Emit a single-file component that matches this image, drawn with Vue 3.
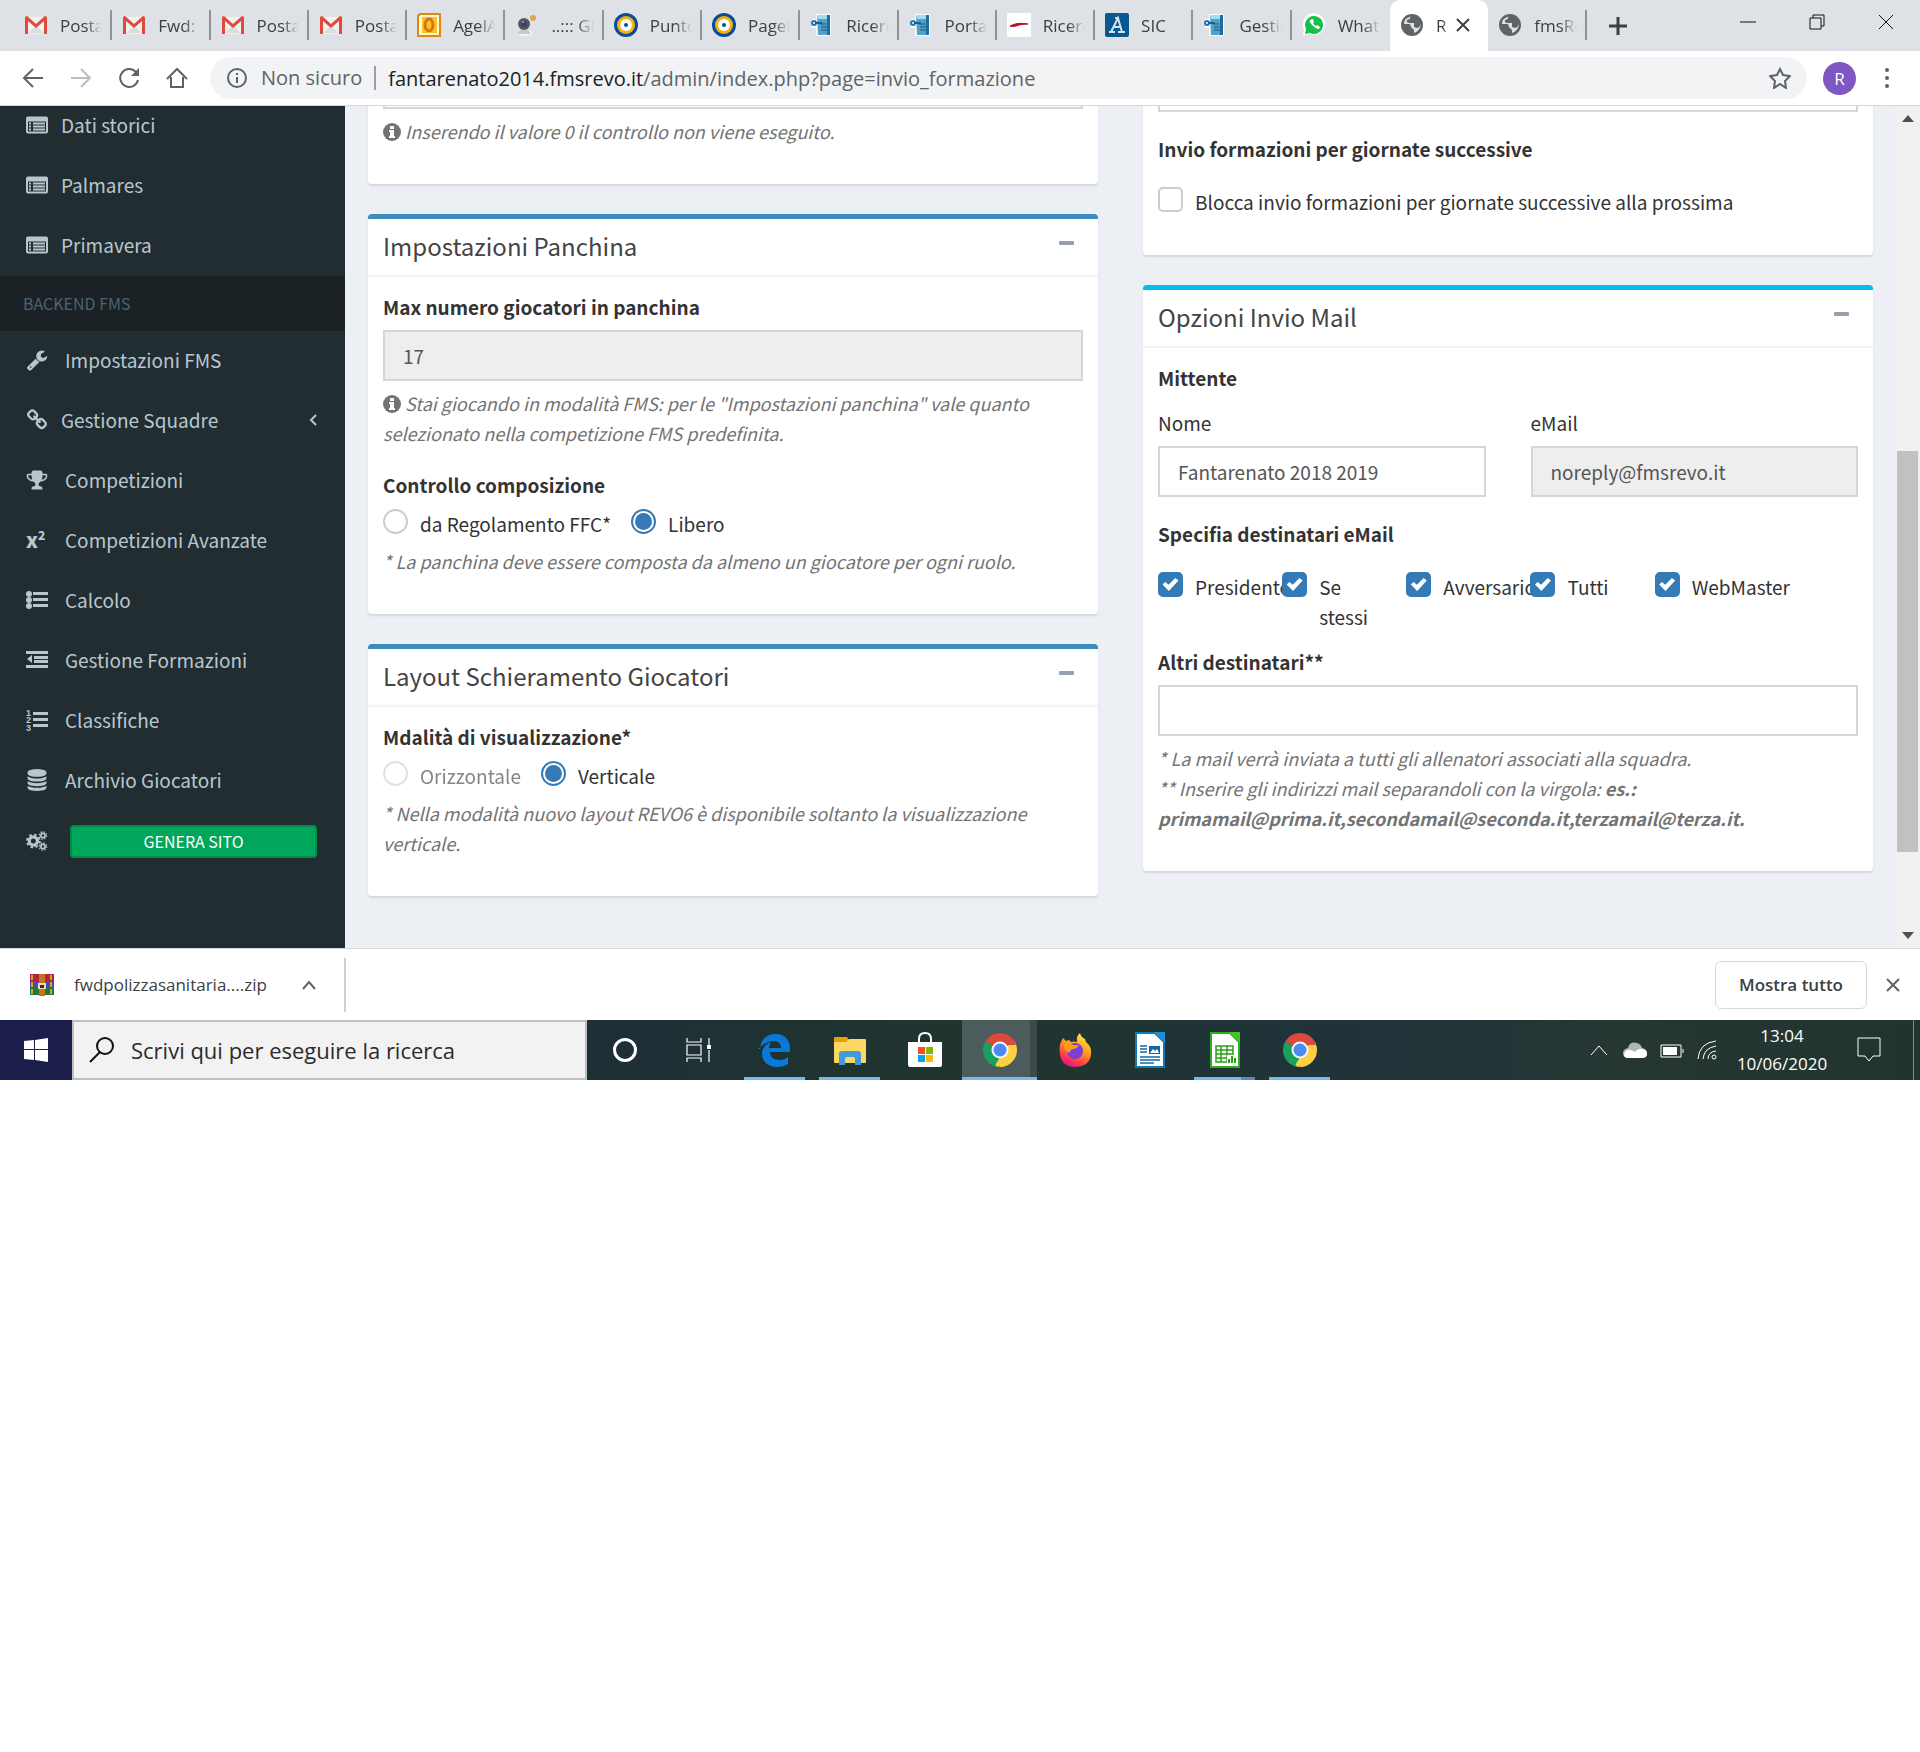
<script setup>
import { ref } from 'vue'

const tabs = [
  { icon: 'gmail', label: 'Posta in arrivo' },
  { icon: 'gmail', label: 'Fwd: polizza' },
  { icon: 'gmail', label: 'Posta in arrivo' },
  { icon: 'gmail', label: 'Posta in arrivo' },
  { icon: 'outlook', label: 'AgelApp' },
  { icon: 'webcam', label: '..::: GIOCO' },
  { icon: 'target', label: 'Punto Fisco' },
  { icon: 'target', label: 'Pagella' },
  { icon: 'scroll', label: 'Ricerca' },
  { icon: 'scroll', label: 'Portale' },
  { icon: 'swoosh', label: 'Ricerca' },
  { icon: 'sic', label: 'SIC' },
  { icon: 'scroll', label: 'Gestione' },
  { icon: 'whatsapp', label: 'WhatsApp' },
  { icon: 'globe', label: 'Revo', active: true },
  { icon: 'globe', label: 'fmsRevo' },
]

const siteMenu = ['Dati storici', 'Palmares', 'Primavera']

const backendMenu = [
  { icon: 'wrench', label: 'Impostazioni FMS' },
  { icon: 'link', label: 'Gestione Squadre', tree: true },
  { icon: 'trophy', label: 'Competizioni' },
  { icon: 'superscript', label: 'Competizioni Avanzate' },
  { icon: 'list-ul', label: 'Calcolo' },
  { icon: 'outdent', label: 'Gestione Formazioni' },
  { icon: 'list-ol', label: 'Classifiche' },
  { icon: 'database', label: 'Archivio Giocatori' },
]

const recipients = ref([
  { label: 'Presidente', on: true },
  { label: 'Se stessi', on: true },
  { label: 'Avversario', on: true },
  { label: 'Tutti', on: true },
  { label: 'WebMaster', on: true },
])

const apps = [
  { icon: 'cortana', name: 'Cortana' },
  { icon: 'taskview', name: 'Visualizzazione attività' },
  { icon: 'edge', name: 'Edge', open: true },
  { icon: 'explorer', name: 'Esplora file', open: true },
  { icon: 'store', name: 'Store' },
  { icon: 'chrome', name: 'Chrome', open: true, current: true },
  { icon: 'firefox', name: 'Firefox' },
  { icon: 'writer', name: 'Writer' },
  { icon: 'calc', name: 'Calc', open: true, stacked: true },
  { icon: 'chrome', name: 'Chrome', open: true },
]

const bench = ref('17')
const composition = ref('libero')
const display = ref('verticale')
const blockNext = ref(false)
const senderName = ref('Fantarenato 2018 2019')
const senderMail = ref('noreply@fmsrevo.it')
const others = ref('')
const valueCheck = ref('')
const deadline = ref('')
</script>

<template>
  <svg class="defs" aria-hidden="true">
    <defs>
      <linearGradient id="paper" x1="0" x2="1" y1="0" y2="1"><stop offset="0" stop-color="#8fd0ea" /><stop offset="1" stop-color="#1c6d9c" /></linearGradient>
      <linearGradient id="flame" x1="0.8" x2="0.3" y1="0" y2="1"><stop offset="0" stop-color="#fff044" /><stop offset="0.45" stop-color="#ff9a1f" /><stop offset="0.8" stop-color="#ff3650" /><stop offset="1" stop-color="#e01490" /></linearGradient>
      <symbol id="gmail" viewBox="0 0 24 24"><path d="M2 4h20v17H2z" fill="#f1f1f1" /><path d="M4 20l8-7 8 7z" fill="#dcdcdc" /><path d="M1 21V5q0-2 2-2l9 8 9-8q2 0 2 2v16h-3V8l-8 7-8-7v13z" fill="#dd4b3e" /></symbol>
      <symbol id="outlook" viewBox="0 0 24 24"><path d="M3 1h20v22H1V3z" fill="#fff6d0" stroke="#d98a12" stroke-width="2" /><path d="M5 4h15v16H5z" fill="#f9c22e" /><ellipse cx="12" cy="12" rx="4" ry="6" fill="none" stroke="#d9760a" stroke-width="3" /></symbol>
      <symbol id="webcam" viewBox="0 0 24 24"><ellipse cx="10" cy="20" rx="8" ry="3" fill="#f3f3f3" /><path d="M5 17h8l3 4H2z" fill="#c9c9c9" /><circle cx="9" cy="11" r="6" fill="#54585e" /><circle cx="9" cy="11" r="3" fill="#33485e" /><circle cx="8" cy="9" r="1" fill="#9ab" /><circle cx="18" cy="5" r="3" fill="#dca35c" /></symbol>
      <symbol id="target" viewBox="0 0 24 24"><circle cx="12" cy="12" r="12" fill="#0a4c9c" /><circle cx="12" cy="12" r="9" fill="#f5b40c" /><circle cx="12" cy="12" r="6" fill="#fff" /><circle cx="12" cy="12" r="2" fill="#0a4c9c" /></symbol>
      <symbol id="scroll" viewBox="0 0 24 24"><path d="M6 1h15v22H6v-8H2V6h4z" fill="#f7fbfd" /><path d="M7 2h13v20H8z" fill="#4fa3cb" /><path d="M7 2h10v4H8z" fill="#a5dbee" /><path d="M17 2h3v20h-3z" fill="#1c6d9c" /><path d="M10 11h6M11 14h6M11 17h6" stroke="#17557f" /><circle cx="4" cy="10" r="2" fill="none" stroke="#1d79b0" stroke-width="2" /><path d="M5 10h7" stroke="#1d5f8c" stroke-width="2" /></symbol>
      <symbol id="swoosh" viewBox="0 0 24 24"><path d="M0 0h24v24H0z" fill="#fff" /><path d="M3 13q7-4 18-2-8 0-12 2-4 1-6 0z" fill="#b30e2c" stroke="#b30e2c" /></symbol>
      <symbol id="sic" viewBox="0 0 24 24"><rect width="24" height="24" rx="2" fill="#08598f" /><path d="M4 19h6M13 19h7M6 19L13 5l4 14M8 14h8M10 5h3" fill="none" stroke="#cfe3f0" stroke-width="2" /></symbol>
      <symbol id="whatsapp" viewBox="0 0 24 24"><path d="M1 23l1-7a11 11 0 1 1 5 5z" fill="#fff" /><path d="M3 21l1-5a9 9 0 1 1 4 4z" fill="#17c04a" /><path d="M8 7q-1 2 2 5t6 4q2 0 2-2l-3-2-1 1q-2-1-3-3l1-1-1-3z" fill="#fff" /></symbol>
      <symbol id="globe" viewBox="0 0 24 24"><circle cx="12" cy="12" r="11" fill="#5f6368" /><path d="M13 3q-4 1-3 3l-3 1q-1 3 3 3h4v4l3 1q3-1 4-4-1 7-7 9v-3l-3-3-1-3H4Q3 5 13 3z" fill="#dee1e6" /></symbol>

      <symbol id="list-alt" viewBox="0 0 22 17"><path d="M2 0h18q2 0 2 2v13q0 2-2 2H2q-2 0-2-2V2q0-2 2-2zM2 5v10h18V5z" fill-rule="evenodd" /><path d="M3 6h2v2H3zM3 9h2v2H3zM3 12h2v2H3zM7 6h12v2H7zM7 9h12v2H7zM7 12h12v2H7z" /></symbol>
      <symbol id="wrench" viewBox="0 0 1792 1792"><path d="M448 1472q0-26-19-45t-45-19-45 19-19 45 19 45 45 19 45-19 19-45zm644-420l-682 682q-37 37-90 37-52 0-91-37l-106-108q-38-36-38-90 0-53 38-91l681-681q39 98 114.500 173.500t173.500 114.500zm634-435q0 39-23 106-47 134-164.500 217.500t-258.500 83.500q-185 0-316.500-131.500t-131.500-316.500 131.500-316.500 316.500-131.500q58 0 121.500 16.500t107.500 46.500q16 11 16 28t-16 28l-293 169v224l193 107q5-3 79-48.500t135.500-81 70.500-35.500q15 0 23.500 10t8.500 25z" /></symbol>
      <symbol id="link" viewBox="0 0 1792 1792"><path d="M1520 1216q0-40-28-68l-208-208q-28-28-68-28-42 0-72 32 3 3 19 18.500t21.500 21.500 15 19 13 25.500 3.500 27.500q0 40-28 68t-68 28q-15 0-27.500-3.500t-25.500-13-19-15-21.500-21.500-18.500-19q-33 31-33 73 0 40 28 68l206 207q27 27 68 27 40 0 68-26l147-146q28-28 28-67zm-703-705q0-40-28-68l-206-207q-28-28-68-28-39 0-68 27l-147 146q-28 28-28 67 0 40 28 68l208 208q27 27 68 27 42 0 72-31-3-3-19-18.500t-21.500-21.500-15-19-13-25.500-3.500-27.500q0-40 28-68t68-28q15 0 27.500 3.500t25.500 13 19 15 21.500 21.500 18.500 19q33-31 33-73zm895 705q0 120-85 203l-147 146q-83 83-203 83-121 0-204-85l-206-207q-83-83-83-203 0-123 88-209l-88-88q-86 88-208 88-120 0-204-84l-208-208q-84-84-84-204t85-203l147-146q83-83 203-83 121 0 204 85l206 207q83 83 83 203 0 123-88 209l88 88q86-88 208-88 120 0 204 84l208 208q84 84 84 204z" /></symbol>
      <symbol id="trophy" viewBox="0 0 1792 1792"><path d="M522 883q-74-162-74-371h-256v96q0 78 94.500 162t235.500 113zm1078-275v-96h-256q0 209-74 371 141-29 235.500-113t94.500-162zm128-128v128q0 71-41.500 143t-112 130-173 97.500-215.500 44.500q-42 54-95 95-38 34-52.500 72.500t-14.500 89.500q0 54 30.500 91t97.500 37q75 0 133.500 45.500t58.500 114.500v64q0 14-9 23t-23 9h-832q-14 0-23-9t-9-23v-64q0-69 58.500-114.500t133.500-45.500q67 0 97.500-37t30.500-91q0-51-14.500-89.500t-52.500-72.500q-53-41-95-95-113-5-215.500-44.500t-173-97.500-112-130-41.500-143v-128q0-40 28-68t68-28h288v-96q0-66 47-113t113-47h576q66 0 113 47t47 113v96h288q40 0 68 28t28 68z" /></symbol>
      <symbol id="list-ul" viewBox="0 0 22 22"><circle cx="3" cy="5" r="3" /><circle cx="3" cy="11" r="3" /><circle cx="3" cy="17" r="3" /><path d="M7 3h15v3H7zM7 9h15v3H7zM7 15h15v3H7z" /></symbol>
      <symbol id="outdent" viewBox="0 0 22 22"><path d="M0 2h22v3H0zM8 7h14v3H8zM8 11h14v3H8zM0 16h22v3H0zM6 6v8l-5-4z" /></symbol>
      <symbol id="list-ol" viewBox="0 0 22 22"><path d="M7 3h15v3H7zM7 9h15v3H7zM7 15h15v3H7z" /></symbol>
      <symbol id="database" viewBox="0 0 1792 1792"><path d="M896 768q237 0 443-43t325-127v170q0 69-103 128t-280 93.500-385 34.500-385-34.500-280-93.500-103-128v-170q119 84 325 127t443 43zm0 768q237 0 443-43t325-127v170q0 69-103 128t-280 93.500-385 34.500-385-34.500-280-93.500-103-128v-170q119 84 325 127t443 43zm0-384q237 0 443-43t325-127v170q0 69-103 128t-280 93.500-385 34.500-385-34.500-280-93.500-103-128v-170q119 84 325 127t443 43zm0-1152q208 0 385 34.500t280 93.500 103 128v128q0 69-103 128t-280 93.500-385 34.500-385-34.500-280-93.500-103-128v-128q0-69 103-128t280-93.500 385-34.500z" /></symbol>
      <symbol id="cogs" viewBox="0 0 24 22"><g fill="none" stroke="currentColor"><circle cx="8" cy="11" r="4.500" stroke-width="3.500" /><circle cx="8" cy="11" r="7" stroke-width="2" stroke-dasharray="2.750 2.750" /><circle cx="18.500" cy="5" r="2.300" stroke-width="1.800" /><circle cx="18.500" cy="5" r="4" stroke-width="1.500" stroke-dasharray="1.570 1.570" /><circle cx="18.500" cy="17" r="2.300" stroke-width="1.800" /><circle cx="18.500" cy="17" r="4" stroke-width="1.500" stroke-dasharray="1.570 1.570" /></g></symbol>
      <symbol id="info" viewBox="0 0 18 18"><circle cx="9" cy="9" r="9" fill="#737373" /><path d="M7 3h4v3H7zM6 7h5v6h1v2H6v-2h1V9H6z" fill="#fff" /></symbol>

      <symbol id="cortana" viewBox="0 0 36 36"><circle cx="18" cy="18" r="10.500" fill="none" stroke="#fff" stroke-width="3" /></symbol>
      <symbol id="taskview" viewBox="0 0 36 36"><path d="M5 6v4h14V6M5 30v-4h14v4M5 13h14v10H5zM27 6v7M27 18v12" fill="none" stroke="#fff" stroke-width="1.200" /><path d="M25 13h4v4h-4z" fill="#fff" /></symbol>
      <symbol id="edge" viewBox="0 0 36 36"><path d="M3 17C4 7 10 2 19 2c10 0 14 8 14 14v4H13c0 5 4 8 9 8 4 0 7-1 9-3v7c-3 2-7 3-11 3-9 0-15-6-15-13 0-6 4-10 9-12-1 2-2 4-2 6h12c0-4-2-7-7-7-6 0-11 3-16 8z" fill="#0a78d7" /></symbol>
      <symbol id="explorer" viewBox="0 0 36 36"><path d="M2 6q0-1 1-1h12l2 3v5H2z" fill="#e3a008" /><path d="M2 10h12l3-3h16q1 0 1 1v22q0 1-1 1H3q-1 0-1-1z" fill="#fdd663" /><path d="M7 33V22q0-3 3-3h16q3 0 3 3v11h-6v-6q0-2-2-2h-6q-2 0-2 2v6z" fill="#3f9be0" /></symbol>
      <symbol id="store" viewBox="0 0 36 36"><path d="M12 12V7q0-6 6-6t6 6v5" fill="none" stroke="#fff" stroke-width="2" /><path d="M1 10h34v23q0 2-2 2H3q-2 0-2-2z" fill="#fff" /><path d="M11 15h7v7h-7z" fill="#f25022" /><path d="M19 15h7v7h-7z" fill="#7fba00" /><path d="M11 23h7v7h-7z" fill="#00a4ef" /><path d="M19 23h7v7h-7z" fill="#ffb900" /></symbol>
      <symbol id="chrome" viewBox="0 0 36 36"><path d="M18 18L3.300 9.500A17 17 0 0 1 32.700 9.500z" fill="#db4a3c" /><path d="M18 18L18 35A17 17 0 0 1 3.300 9.500z" fill="#1aa05d" /><path d="M18 18L32.700 9.500A17 17 0 0 1 18 35z" fill="#fdd043" /><path d="M18 10h15l1 3H18z" fill="#db4a3c" /><path d="M11 22l7 4 6-3-7 12-3-1z" fill="#fdd043" /><path d="M3.300 9.500l8 13 6 4-5 8-8-7-3-9z" fill="#1aa05d" /><circle cx="18" cy="18" r="8.500" fill="#f5f5f5" /><circle cx="18" cy="18" r="6.500" fill="#4a8af4" /></symbol>
      <symbol id="firefox" viewBox="0 0 36 36"><path d="M3 12l3-6 3 3 3-1 2 2q3-1 6 0-1-6 3-9 1 4 5 6l1 3q6 5 5 12-1 12-15 13-14 0-16-12-1-6 0-11z" fill="url(#flame)" /><circle cx="18" cy="19" r="8" fill="#7b3fd6" /><path d="M6 11q5-1 8 1 4 2 8 1-2 4-6 4-4 1-3 4-6-2-7-10z" fill="#ff9a1f" /></symbol>
      <symbol id="writer" viewBox="0 0 36 36"><path d="M4 1h19l9 9v25H4z" fill="#fff" stroke="#1278b8" stroke-width="2" /><path d="M22 0h11v11z" fill="#1d8fd3" /><path d="M8 14h7M8 17h7M8 20h7M8 25h20M8 28h20M8 31h14" stroke="#0e69a6" stroke-width="1.500" /><path d="M17 14h11v8H17z" fill="#0e69a6" /><path d="M18 21l3-4 2 2 2-2 2 4z" fill="#fff" /></symbol>
      <symbol id="calc" viewBox="0 0 36 36"><path d="M4 1h19l9 9v25H4z" fill="#fff" stroke="#2dae1c" stroke-width="2" /><path d="M22 0h11v11z" fill="#43c330" /><path d="M9 14h17v16H9zM9 18h17M9 22h17M9 26h17M14 14v16M20 14v16" fill="none" stroke="#2b9e1a" stroke-width="1.500" /><path d="M20 23h8v8h-8z" fill="#fff" /><path d="M21 27h2v4h-2zM24 24h2v7h-2zM27 26h2v5h-2z" fill="#2b9e1a" /></symbol>
    </defs>
  </svg>

  <div class="screen">
    <header class="tabstrip">
      <nav class="tabs" aria-label="Schede">
        <div v-for="(tab, i) in tabs" :key="i" class="tab" :class="{ active: tab.active, before: tabs[i + 1]?.active }">
          <button class="tab-main">
            <svg class="favicon"><use :href="'#' + tab.icon" /></svg>
            <span class="tab-label">{{ tab.label }}</span>
          </button>
          <button v-if="tab.active" class="tab-close" aria-label="Chiudi scheda">
            <svg viewBox="0 0 14 14"><path d="M1 1l12 12M13 1L1 13" /></svg>
          </button>
        </div>
      </nav>
      <button class="new-tab" aria-label="Nuova scheda"><svg viewBox="0 0 18 18"><path d="M9 0v18M0 9h18" /></svg></button>
      <div class="window-controls">
        <button aria-label="Riduci"><svg viewBox="0 0 16 16"><path d="M0 8h16" /></svg></button>
        <button aria-label="Ripristina"><svg viewBox="0 0 16 16"><path d="M1 4h11v11H1zM4 4V1h11v11h-3" /></svg></button>
        <button aria-label="Chiudi"><svg viewBox="0 0 16 16"><path d="M1 1l14 14M15 1L1 15" /></svg></button>
      </div>
    </header>

    <div class="toolbar">
      <button aria-label="Indietro"><svg viewBox="0 0 22 22"><path d="M21 11H2M11 2l-9 9 9 9" /></svg></button>
      <button aria-label="Avanti" class="dim"><svg viewBox="0 0 22 22"><path d="M1 11h19M11 2l9 9-9 9" /></svg></button>
      <button aria-label="Ricarica"><svg viewBox="0 0 22 22"><path d="M18 5a9 9 0 1 0 2 8" /><path d="M21 1v8h-8z" class="solid" /></svg></button>
      <button aria-label="Pagina iniziale"><svg viewBox="0 0 22 22"><path d="M1 12L11 2l10 10M5 10v10h12V10" /></svg></button>
      <div class="omnibox">
        <svg class="site-info" viewBox="0 0 22 22"><circle cx="11" cy="11" r="9" /><path d="M11 10v6M11 6v2" /></svg>
        <span class="security">Non sicuro</span>
        <span class="url"><b>fantarenato2014.fmsrevo.it</b>/admin/index.php?page=invio_formazione</span>
        <button aria-label="Aggiungi ai preferiti"><svg viewBox="0 0 22 22"><path d="M11 2l3 6 7 1-5 5 1 7-6-4-6 4 1-7-5-5 7-1z" /></svg></button>
      </div>
      <button class="avatar">R</button>
      <button aria-label="Menu" class="dots"><svg viewBox="0 0 6 22"><circle cx="3" cy="3" r="2" /><circle cx="3" cy="11" r="2" /><circle cx="3" cy="19" r="2" /></svg></button>
    </div>

    <div class="viewport">
      <aside class="sidebar">
        <ul>
          <li v-for="item in siteMenu" :key="item">
            <a href="#"><svg class="menu-icon"><use href="#list-alt" /></svg><span>{{ item }}</span></a>
          </li>
          <li class="section">BACKEND FMS</li>
          <li v-for="item in backendMenu" :key="item.label">
            <a href="#" :class="{ spaced: !item.tree }">
              <span v-if="item.icon === 'superscript'" class="menu-icon power">x<sup>2</sup></span>
              <svg v-else-if="item.icon === 'list-ol'" class="menu-icon">
                <use href="#list-ol" />
                <text x="0" y="7">1</text><text x="0" y="14">2</text><text x="0" y="22">3</text>
              </svg>
              <svg v-else class="menu-icon"><use :href="'#' + item.icon" /></svg>
              <span>{{ item.label }}</span>
              <svg v-if="item.tree" class="caret" viewBox="0 0 8 12"><path d="M7 1L2 6l5 5" /></svg>
            </a>
          </li>
          <li class="generate">
            <svg class="menu-icon"><use href="#cogs" /></svg>
            <button>GENERA SITO</button>
          </li>
        </ul>
      </aside>

      <main class="content">
        <div class="column">
          <section class="box">
            <div class="body">
              <input v-model="valueCheck" class="field" type="text" aria-label="Valore di controllo">
              <p class="help"><svg class="info"><use href="#info" /></svg> Inserendo il valore 0 il controllo non viene eseguito.</p>
            </div>
          </section>

          <section class="box primary">
            <div class="head"><h3>Impostazioni Panchina</h3><button aria-label="Comprimi"></button></div>
            <div class="body">
              <label class="title" for="bench">Max numero giocatori in panchina</label>
              <input id="bench" v-model="bench" class="field" type="text" disabled>
              <p class="help"><svg class="info"><use href="#info" /></svg> Stai giocando in modalità FMS: per le "Impostazioni panchina" vale quanto selezionato nella competizione FMS predefinita.</p>
              <h4 class="title next">Controllo composizione</h4>
              <div class="radios">
                <label><input v-model="composition" type="radio" name="composition" value="ffc">da Regolamento FFC*</label>
                <label><input v-model="composition" type="radio" name="composition" value="libero">Libero</label>
              </div>
              <p class="help">* La panchina deve essere composta da almeno un giocatore per ogni ruolo.</p>
            </div>
          </section>

          <section class="box primary">
            <div class="head"><h3>Layout Schieramento Giocatori</h3><button aria-label="Comprimi"></button></div>
            <div class="body">
              <h4 class="title">Mdalità di visualizzazione*</h4>
              <div class="radios">
                <label class="off"><input v-model="display" type="radio" name="display" value="orizzontale" disabled>Orizzontale</label>
                <label><input v-model="display" type="radio" name="display" value="verticale">Verticale</label>
              </div>
              <p class="help">* Nella modalità nuovo layout REVO6 è disponibile soltanto la visualizzazione verticale.</p>
            </div>
          </section>
        </div>

        <div class="column">
          <section class="box">
            <div class="body">
              <input v-model="deadline" class="field" type="text" aria-label="Termine di invio">
              <h4 class="title next">Invio formazioni per giornate successive</h4>
              <div class="checks single">
                <label><input v-model="blockNext" type="checkbox"><span>Blocca invio formazioni per giornate successive alla prossima</span></label>
              </div>
            </div>
          </section>

          <section class="box cyan">
            <div class="head"><h3>Opzioni Invio Mail</h3><button aria-label="Comprimi"></button></div>
            <div class="body">
              <h4 class="title">Mittente</h4>
              <div class="pair">
                <div><label for="sender">Nome</label><input id="sender" v-model="senderName" class="field" type="text"></div>
                <div><label for="mail">eMail</label><input id="mail" v-model="senderMail" class="field" type="text" disabled></div>
              </div>
              <h4 class="title next">Specifia destinatari eMail</h4>
              <div class="checks">
                <label v-for="r in recipients" :key="r.label"><input v-model="r.on" type="checkbox"><span>{{ r.label }}</span></label>
              </div>
              <label class="title others" for="others">Altri destinatari**</label>
              <input id="others" v-model="others" class="field" type="text">
              <p class="help">* La mail verrà inviata a tutti gli allenatori associati alla squadra.<br>** Inserire gli indirizzi mail separandoli con la virgola: <strong>es.: primamail@prima.it,secondamail@seconda.it,terzamail@terza.it.</strong></p>
            </div>
          </section>
        </div>
      </main>

      <div class="scrollbar" aria-hidden="true">
        <svg viewBox="0 0 12 8"><path d="M0 7l6-7 6 7z" /></svg>
        <div class="track"><div class="thumb"></div></div>
        <svg viewBox="0 0 12 8"><path d="M0 1l6 7 6-7z" /></svg>
      </div>
    </div>

    <div class="downloads">
      <button class="download">
        <svg class="archive" viewBox="0 0 24 22"><path d="M0 0h24v7H0z" fill="#b3243f" /><path d="M0 7h24v7H0z" fill="#4b4ba8" /><path d="M0 14h24v7H0z" fill="#1c7c3c" /><path d="M2 1v5M2 8v5M2 15v5M21 1v5M21 8v5M21 15v5" stroke="#d9a22b" stroke-width="2" /><path d="M9 0h6v22H9z" fill="#c9741c" /><path d="M8 9h8v6H8z" fill="#e9d9b8" /><path d="M10 11h4v3h-4z" fill="#442b18" /></svg>
        <span>fwdpolizzasanitaria....zip</span>
        <svg class="up" viewBox="0 0 14 10"><path d="M1 9l6-7 6 7" /></svg>
      </button>
      <button class="show-all">Mostra tutto</button>
      <button class="dismiss" aria-label="Chiudi"><svg viewBox="0 0 14 14"><path d="M1 1l12 12M13 1L1 13" /></svg></button>
    </div>

    <footer class="taskbar">
      <button class="start" aria-label="Start"><svg viewBox="0 0 24 24"><path d="M0 3l10-1v9H0zM11 2l13-2v11H11zM0 12h10v10L0 21zM11 12h13v12l-13-2z" /></svg></button>
      <label class="search">
        <svg viewBox="0 0 26 26"><circle cx="16" cy="9" r="8" /><path d="M11 15L1 25" /></svg>
        <input type="text" placeholder="Scrivi qui per eseguire la ricerca" aria-label="Cerca">
      </label>
      <nav class="apps" aria-label="Applicazioni">
        <button v-for="(app, i) in apps" :key="i" :aria-label="app.name" :class="{ open: app.open, current: app.current, stacked: app.stacked }">
          <svg><use :href="'#' + app.icon" /></svg>
        </button>
      </nav>
      <div class="tray">
        <svg class="t-up" viewBox="0 0 18 12"><path d="M1 11l8-9 8 9" /></svg>
        <svg class="t-cloud" viewBox="0 0 24 18"><path d="M5 17q-5 0-5-5 0-4 5-5 2-7 9-5 4 1 5 5 5 1 5 5 0 5-5 5z" fill="#aeb6b6" /><path d="M4 17q-3-1-3-4 2-5 7-4l4 2q3-4 8-3 4 1 4 5 0 4-5 4z" fill="#fff" /></svg>
        <svg class="t-battery" viewBox="0 0 24 18"><path d="M1 4h20v12H1zM23 8v4" class="shell" /><path d="M3 6h14v8H3z" fill="#fff" /></svg>
        <svg class="t-wifi" viewBox="0 0 20 20"><path d="M1 19Q2 3 19 1M6 19q1-11 13-13M11 19q0-7 8-8" /><circle cx="17" cy="17" r="2" /></svg>
        <time><span>13:04</span><span>10/06/2020</span></time>
        <svg class="t-note" viewBox="0 0 24 26"><path d="M1 1h22v18h-7l-4 5-4-5H1z" /></svg>
        <span class="peek"></span>
      </div>
    </footer>
  </div>
</template>

<style>
body {
  margin: 0;
  background: #fff;
}
</style>

<style scoped>
* {
  box-sizing: border-box;
}
.defs {
  position: absolute;
  width: 0;
  height: 0;
}
.screen {
  font-family: "Open Sans", "Noto Sans", sans-serif;
  font-size: 18px;
  color: #3c4043;
}
button {
  padding: 0;
  border: 0;
  background: none;
  font: inherit;
  color: inherit;
  display: flex;
  align-items: center;
  justify-content: center;
}
h3,
h4,
p,
ul {
  margin: 0;
  padding: 0;
}

/* Tab strip */
.tabstrip {
  display: flex;
  align-items: stretch;
  height: 51px;
  padding-left: 14px;
  background: #dee1e6;
}
.tabs {
  display: flex;
  flex: none;
  width: 82.5%;
}
.tab {
  flex: 1 1 0;
  min-width: 0;
  display: flex;
  align-items: center;
  padding-bottom: 1px;
}
.tab::after {
  content: "";
  width: 2px;
  height: 30px;
  background: #909398;
}
.tab.before::after,
.tab.active::after {
  background: none;
}
.tab.active {
  background: #fff;
  border-radius: 10px 10px 0 0;
}
.tab-main {
  flex: 1;
  min-width: 0;
  justify-content: flex-start;
  gap: 12px;
  padding: 0 8px 0 10px;
}
.favicon {
  width: 24px;
  height: 24px;
  flex: none;
}
.tab-label {
  flex: 1;
  min-width: 0;
  overflow: hidden;
  white-space: nowrap;
  text-align: left;
  font-size: 17px;
  mask-image: linear-gradient(to right, #000 60%, transparent);
}
.tab-close {
  margin-right: 16px;
}
.tab-close svg {
  width: 14px;
  height: 14px;
  stroke: #3c4043;
  stroke-width: 2;
}
.new-tab {
  width: 64px;
}
.new-tab svg {
  width: 18px;
  height: 18px;
  stroke: #3c4043;
  stroke-width: 3;
}
.window-controls {
  display: flex;
  margin-left: auto;
  height: 43px;
}
.window-controls button {
  width: 69px;
}
.window-controls svg {
  width: 16px;
  height: 16px;
  fill: none;
  stroke: #111;
}

/* Toolbar */
.toolbar {
  display: flex;
  align-items: center;
  height: 55px;
  padding-left: 9px;
  border-bottom: 1px solid #d5d7da;
}
.toolbar > button {
  width: 48px;
}
.toolbar svg {
  width: 22px;
  height: 22px;
  fill: none;
  stroke: #5f6368;
  stroke-width: 2;
}
.toolbar .dim svg {
  stroke: #bbbdc0;
}
.toolbar .solid {
  fill: #5f6368;
  stroke: none;
}
.omnibox {
  flex: 1;
  min-width: 0;
  display: flex;
  align-items: center;
  height: 42px;
  margin-left: 9px;
  padding: 0 16px;
  border-radius: 21px;
  background: #f1f3f4;
  font-size: 20px;
  color: #5f6368;
}
.security {
  margin: 0 12px 0 13px;
  padding-right: 12px;
  border-right: 2px solid #9a9da1;
  line-height: 24px;
}
.url {
  flex: 1;
  min-width: 0;
  overflow: hidden;
  white-space: nowrap;
}
.url b {
  font-weight: 400;
  color: #202124;
}
.toolbar .avatar {
  width: 33px;
  height: 33px;
  margin: 0 16px;
  border-radius: 50%;
  background: #7e57c2;
  color: #fff;
  font-size: 17px;
}
.toolbar .dots {
  width: 30px;
  margin-right: 18px;
}
.dots svg {
  width: 6px;
  fill: #5f6368;
  stroke: none;
}

/* Page area */
.viewport {
  display: flex;
  overflow: hidden;
  background: #ecf0f5;
  border-bottom: 1px solid #d5d7da;
  font-family: "Source Sans Pro", "Noto Sans CJK SC", sans-serif;
  font-size: 19px;
  line-height: 30px;
  color: #333;
}
.sidebar {
  flex: none;
  width: 345px;
  background: #222d32;
  color: #b8c7ce;
}
.sidebar ul {
  list-style: none;
  margin-top: -10px;
}
.sidebar a,
.generate {
  display: flex;
  align-items: center;
  height: 60px;
  padding: 0 28px 0 26px;
  gap: 13px;
  color: inherit;
  text-decoration: none;
}
.sidebar a {
  padding-bottom: 2px;
}
.sidebar a.spaced {
  gap: 17px;
}
.menu-icon {
  flex: none;
  width: 22px;
  height: 22px;
  fill: currentColor;
}
.menu-icon text {
  font: 700 9px "Liberation Sans", sans-serif;
}
.power {
  font-weight: 900;
  font-size: 20px;
  line-height: 22px;
}
.power sup {
  font-size: 12px;
  line-height: 0;
}
.caret {
  width: 8px;
  height: 12px;
  margin-left: auto;
  fill: none;
  stroke: currentColor;
  stroke-width: 2;
}
.section {
  height: 55px;
  padding: 0 23px;
  line-height: 55px;
  font-size: 16px;
  color: #4b646f;
  background: #1a2226;
}
.generate {
  gap: 22px;
}
.generate button {
  flex: 1;
  height: 33px;
  border: 2px solid #008d4c;
  border-radius: 4px;
  background: #00a65a;
  color: #fff;
  font-size: 16px;
}

.content {
  flex: 1;
  min-width: 0;
  display: grid;
  grid-template-columns: minmax(0, 1fr) minmax(0, 1fr);
  align-items: start;
  gap: 45px;
  margin-top: -63px;
  padding: 0 22px 52px 23px;
}
.column {
  display: flex;
  flex-direction: column;
  gap: 30px;
}
.column:last-child {
  padding-top: 3px;
}
.box {
  background: #fff;
  border-radius: 4px;
  box-shadow: 0 2px 2px rgba(0, 0, 0, 0.1);
}
.primary {
  border-top: 5px solid #3c8dbc;
}
.cyan {
  border-top: 5px solid #00c0ef;
}
.head {
  display: flex;
  justify-content: space-between;
  height: 58px;
  padding: 0 24px 0 15px;
  border-bottom: 2px solid #f4f4f4;
}
.head h3 {
  font-size: 24px;
  font-weight: 400;
  line-height: 54px;
  color: #444;
}
.head button {
  width: 15px;
  height: 48px;
}
.head button::before {
  content: "";
  width: 15px;
  height: 4px;
  border-radius: 1px;
  background: #97a0b3;
}
.body {
  padding: 15px 15px 38px;
}
.title {
  display: block;
  font-size: 19px;
  font-weight: 700;
  line-height: 30px;
}
.next {
  margin-top: 22px;
}
.field {
  display: block;
  width: 100%;
  height: 51px;
  padding: 0 18px;
  border: 2px solid #d2d6de;
  border-radius: 0;
  background: #fff;
  font: inherit;
  color: #555;
}
.field:disabled {
  background: #eee;
}
label + .field {
  margin-top: 8px;
}
.help {
  margin-top: 7px;
  font-size: 18px;
  font-style: italic;
  color: #737373;
}
.info {
  width: 18px;
  height: 18px;
  vertical-align: -2px;
}
.radios {
  display: flex;
  flex-wrap: wrap;
  gap: 20px;
  margin-top: 9px;
}
.radios label {
  display: flex;
  gap: 12px;
}
.radios .off {
  opacity: 0.6;
}
input[type="radio"],
input[type="checkbox"] {
  appearance: none;
  flex: none;
  display: grid;
  place-content: center;
  width: 25px;
  height: 25px;
  margin: 0;
  border: 2px solid #ccc;
  background: #fff;
}
input[type="radio"] {
  border-radius: 50%;
}
input[type="radio"]:checked {
  border-color: #337ab7;
}
input[type="radio"]:checked::after {
  content: "";
  width: 17px;
  height: 17px;
  border-radius: 50%;
  background: #337ab7;
}
input[type="checkbox"] {
  border-radius: 5px;
  position: relative;
}
input[type="checkbox"]:checked {
  border-color: #337ab7;
  background: #337ab7;
}
input[type="checkbox"]:checked::after {
  content: "";
  width: 16px;
  height: 13px;
  background: #fff;
  clip-path: polygon(0 50%, 17% 30%, 38% 52%, 80% 0, 100% 20%, 40% 100%);
}
.checks {
  display: grid;
  grid-template-columns: repeat(6, 1fr);
  margin: 23px -45px 0 0;
}
.checks label {
  display: flex;
  gap: 12px;
  padding-right: 45px;
  min-width: 0;
}
.checks label span {
  width: 42px;
}
.checks.single {
  display: block;
}
.checks.single label span {
  width: auto;
}
.pair {
  display: grid;
  grid-template-columns: 1fr 1fr;
  gap: 45px;
  margin-top: 15px;
}
.pair label {
  display: block;
}
.others {
  margin-top: 15px;
}

.scrollbar {
  flex: none;
  width: 25px;
  display: flex;
  flex-direction: column;
  align-items: center;
  padding: 9px 0;
  background: #f1f1f1;
}
.scrollbar svg {
  width: 12px;
  height: 8px;
  fill: #505050;
}
.track {
  flex: 1;
  display: flex;
  flex-direction: column;
  justify-content: flex-end;
  padding-bottom: 79px;
}
.thumb {
  width: 21px;
  height: 55%;
  background: #c1c1c1;
}

/* Downloads shelf */
.downloads {
  display: flex;
  align-items: center;
  height: 71px;
  padding-right: 20px;
  background: #fff;
}
.download {
  justify-content: flex-start;
  width: 346px;
  height: 54px;
  padding: 0 28px 0 30px;
  border-right: 2px solid #cfcfcf;
  font-size: 17px;
}
.archive {
  width: 24px;
  height: 22px;
  margin-right: 20px;
}
.up {
  width: 14px;
  height: 10px;
  margin-left: auto;
  fill: none;
  stroke: #5f6368;
  stroke-width: 2;
}
.show-all {
  width: 152px;
  height: 48px;
  margin-left: auto;
  border: 1px solid #d5d8dc;
  border-radius: 6px;
  font-size: 17px;
  font-weight: 600;
}
.dismiss {
  margin-left: 19px;
}
.dismiss svg {
  width: 14px;
  height: 14px;
  stroke: #5f6368;
  stroke-width: 2;
}

/* Taskbar */
.taskbar {
  display: flex;
  height: 60px;
  background: linear-gradient(90deg, #1c2c38 0%, #1e3036 32%, #20352f 50%, #20333a 70%, #263733 85%, #22342f 100%);
  color: #fff;
}
.start {
  width: 72px;
  background: #1b1e4b;
}
.start svg {
  width: 24px;
  height: 24px;
  fill: #fff;
}
.search {
  display: flex;
  align-items: center;
  flex: 0 1 515px;
  gap: 16px;
  padding: 0 15px;
  border: 2px solid #bfbfbf;
  background: #f2f2f2;
}
.search svg {
  flex: none;
  width: 26px;
  height: 26px;
  fill: none;
  stroke: #111;
  stroke-width: 2;
}
.search input {
  flex: 1;
  min-width: 0;
  padding: 0;
  border: 0;
  background: none;
  font: inherit;
  font-size: 22px;
}
.search input::placeholder {
  color: #2b2b2b;
}
.apps {
  display: flex;
}
.apps button {
  position: relative;
  width: 75px;
}
.apps svg {
  width: 36px;
  height: 36px;
}
.apps .current {
  background: linear-gradient(90deg, #4c5c5d 68px, #3c4a4a 68px);
}
.apps .open::after {
  content: "";
  position: absolute;
  bottom: 0;
  left: 7px;
  right: 7px;
  height: 3px;
  background: #76b9ed;
}
.apps .current::after {
  left: 0;
  right: 0;
}
.apps .stacked::after {
  background: linear-gradient(90deg, #76b9ed 47px, #5a8db5 47px);
}
.tray {
  display: flex;
  align-items: center;
  margin-left: auto;
}
.tray svg {
  fill: none;
  stroke: #fff;
  stroke-width: 1;
}
.t-up {
  width: 18px;
  height: 12px;
  margin-right: 15px;
}
.tray .t-cloud,
.tray .t-battery {
  width: 24px;
  height: 18px;
  margin-right: 13px;
  stroke: none;
}
.t-battery .shell {
  stroke: #fff;
  stroke-width: 1;
}
.t-wifi {
  width: 20px;
  height: 20px;
}
time {
  display: flex;
  flex-direction: column;
  align-items: center;
  width: 130px;
  font-size: 17px;
  line-height: 28px;
}
.t-note {
  width: 24px;
  height: 26px;
  margin: 0 32px 0 10px;
}
.peek {
  width: 7px;
  height: 60px;
  border-left: 1px solid #7d8a88;
}
</style>
